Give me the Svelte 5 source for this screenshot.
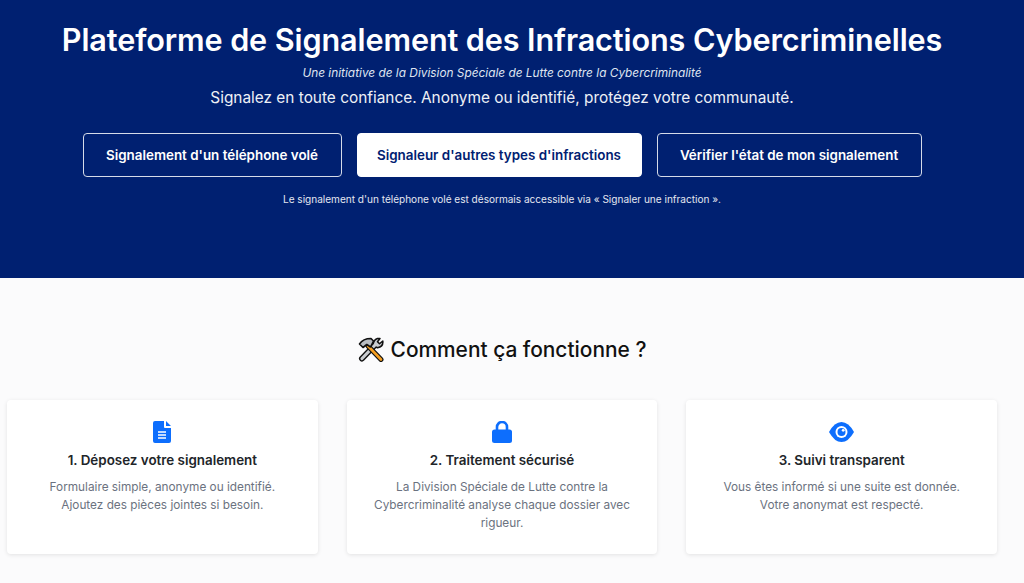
<script>
  const steps = [
    { icon: "doc", title: "1. Déposez votre signalement", text: ["Formulaire simple, anonyme ou identifié.", "Ajoutez des pièces jointes si besoin."] },
    { icon: "lock", title: "2. Traitement sécurisé", text: ["La Division Spéciale de Lutte contre la", "Cybercriminalité analyse chaque dossier avec", "rigueur."] },
    { icon: "eye", title: "3. Suivi transparent", text: ["Vous êtes informé si une suite est donnée.", "Votre anonymat est respecté."] }
  ];
</script>

<section class="hero">
  <h1>Plateforme de Signalement des Infractions Cybercriminelles</h1>
  <p class="initiative">Une initiative de la Division Spéciale de Lutte contre la Cybercriminalité</p>
  <p class="lead">Signalez en toute confiance. Anonyme ou identifié, protégez votre communauté.</p>
  <div class="actions">
    <button class="btn" style="width: 259px">Signalement d'un téléphone volé</button>
    <button class="btn solid" style="width: 285px">Signaleur d'autres types d'infractions</button>
    <button class="btn" style="width: 265px">Vérifier l'état de mon signalement</button>
  </div>
  <p class="note">Le signalement d'un téléphone volé est désormais accessible via « Signaler une infraction ».</p>
</section>

<section class="how">
  <h2>
    <svg class="tools" viewBox="0 0 26 25" width="26" height="25">
      <!-- wrench, under the hammer -->
      <path d="M4 21.500 L17.500 7.500" stroke="#111" stroke-width="6" stroke-linecap="round"/>
      <path d="M15.500 9 Q14.500 3.500 19.500 1.500 L22 1.500 L19.500 4.800 L21.500 6.800 L24.800 4 Q25.500 9.500 19.500 10.800 Z" fill="#c9ccd0" stroke="#111" stroke-width="1.500" stroke-linejoin="round"/>
      <path d="M4 21.500 L17.500 7.500" stroke="#c9ccd0" stroke-width="3.200" stroke-linecap="round"/>
      <!-- hammer -->
      <path d="M10 9 L23 22.500" stroke="#111" stroke-width="5" stroke-linecap="round"/>
      <path d="M10 9 L23 22.500" stroke="#f59e1f" stroke-width="2.600" stroke-linecap="round"/>
      <path d="M1.500 7 Q5 1.500 13 1.500 L15.500 4 L12.500 10 L8.800 7.500 L5 10.500 Z" fill="#b9bdc2" stroke="#111" stroke-width="1.600" stroke-linejoin="round"/>
    </svg>
    Comment ça fonctionne ?
  </h2>
  <div class="cards">
    {#each steps as step}
      <article class="card">
        <div class="icon">
          {#if step.icon === "doc"}
            <svg viewBox="0 0 18 22" width="18" height="22">
              <path d="M2 0 H11 V6 Q11 7 12 7 H18 V20 Q18 22 16 22 H2 Q0 22 0 20 V2 Q0 0 2 0 Z M13 0 L18 5 H13 Z" fill="#0d6efd"/>
              <path d="M5 11 H13 M5 14 H13 M5 17 H13" stroke="#fff" stroke-width="1.500"/>
            </svg>
          {:else if step.icon === "lock"}
            <svg viewBox="0 0 20 22" width="20" height="22">
              <path d="M5 9 V6 a5 5 0 0 1 10 0 V9" fill="none" stroke="#0d6efd" stroke-width="2.600"/>
              <rect x="0" y="8.500" width="20" height="13.500" rx="2.500" fill="#0d6efd"/>
            </svg>
          {:else}
            <svg viewBox="0 0 25 20" width="25" height="20">
              <path d="M0 10 Q5.500 0 12.500 0 Q19.500 0 25 10 Q19.500 20 12.500 20 Q5.500 20 0 10 Z" fill="#0d6efd"/>
              <circle cx="12.500" cy="10" r="6" fill="#fff"/>
              <circle cx="12.500" cy="10" r="4" fill="#0d6efd"/>
              <circle cx="14.200" cy="8.300" r="1.400" fill="#fff"/>
            </svg>
          {/if}
        </div>
        <h3>{step.title}</h3>
        <p>
          {#each step.text as line}
            <span>{line}</span>
          {/each}
        </p>
      </article>
    {/each}
  </div>
</section>

<style>
  :global(body) {
    margin: 0;
    background: #fbfbfc;
    font-family: Inter, "Noto Sans", sans-serif;
  }

  .hero {
    box-sizing: border-box;
    height: 278px;
    background: #002071;
    color: #fff;
    text-align: center;
    padding: 21px 20px 0 0;
  }

  h1 {
    margin: 0;
    font-size: 30.6px;
    line-height: 38px;
    font-weight: 600;
    letter-spacing: -0.1px;
    white-space: nowrap;
  }

  .initiative {
    margin: 6px 0 0;
    font-size: 11.85px;
    line-height: 16px;
    font-style: italic;
    color: #dfe4f0;
  }

  .lead {
    margin: 6px 0 0;
    font-size: 15.4px;
    line-height: 22px;
    color: #eef0f6;
  }

  .actions {
    display: flex;
    justify-content: center;
    gap: 15px;
    margin-top: 24px;
  }

  .btn {
    box-sizing: border-box;
    height: 44px;
    background: transparent;
    border: 1px solid #d5dbe8;
    border-radius: 4px;
    color: #fff;
    font: 600 13.4px Inter, sans-serif;
    padding: 0;
  }

  .btn.solid {
    background: #fff;
    color: #002071;
    border-color: #fff;
  }

  .note {
    margin: 14px 0 0;
    font-size: 10.05px;
    line-height: 16px;
    color: #e4e7f0;
  }

  .how {
    padding: 58px 27px 0 7px;
    height: 305px;
    box-sizing: border-box;
  }

  h2 {
    display: flex;
    justify-content: center;
    align-items: center;
    gap: 7px;
    margin: 0;
    height: 27px;
    font-size: 20.9px;
    font-weight: 500;
    color: #111;
  }

  .cards {
    display: flex;
    gap: 29px;
    margin-top: 37px;
  }

  .card {
    box-sizing: border-box;
    width: 311px;
    height: 154px;
    background: #fff;
    border-radius: 4px;
    box-shadow: 0 1px 4px rgba(0, 0, 0, 0.1);
    text-align: center;
    padding-top: 21px;
  }

  .icon {
    height: 22px;
    display: flex;
    justify-content: center;
    align-items: center;
  }

  h3 {
    margin: 8px 0 0;
    font-size: 13.4px;
    line-height: 18px;
    font-weight: 600;
    color: #212529;
  }

  .card p {
    margin: 9px 0 0;
    font-size: 11.8px;
    line-height: 18px;
    color: #6b7280;
  }

  .card span {
    display: block;
  }
</style>
